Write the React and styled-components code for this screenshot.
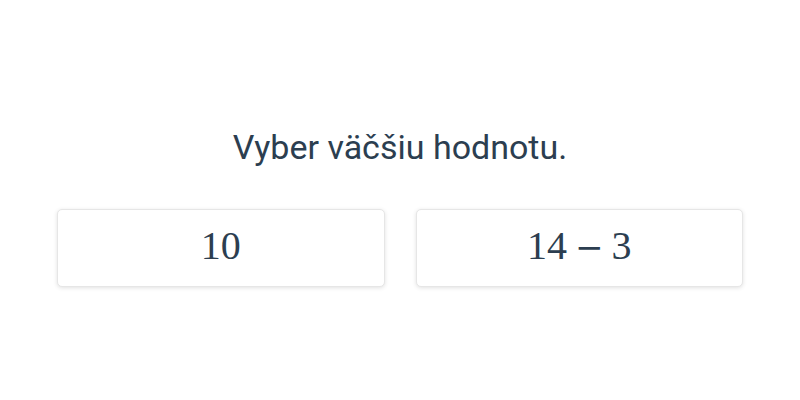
import React from "react";
import styled, { createGlobalStyle } from "styled-components";

const GlobalStyle = createGlobalStyle`
  html, body {
    margin: 0;
    padding: 0;
    background: #ffffff;
  }
  body {
    font-family: Roboto, "Liberation Sans", sans-serif;
  }
`;

const Page = styled.div`
  width: 800px;
  height: 400px;
  box-sizing: border-box;
  padding: 125px 57px 0;
  display: flex;
  flex-direction: column;
  align-items: stretch;
`;

const Question = styled.h2`
  margin: 0;
  text-align: center;
  font-family: Roboto, sans-serif;
  font-weight: 400;
  font-size: 34px;
  line-height: 44px;
  color: #2c3e50;
`;

const Options = styled.div`
  margin-top: 40px;
  display: grid;
  grid-template-columns: 1fr 1fr;
  gap: 31px;
`;

const Option = styled.button`
  height: 78px;
  box-sizing: border-box;
  background: #ffffff;
  border: 1px solid #e6e6e6;
  border-radius: 5px;
  box-shadow: 0 1px 4px rgba(0, 0, 0, 0.12);
  display: flex;
  align-items: center;
  justify-content: center;
  cursor: pointer;
  padding: 0 0 5px;
`;

const MathText = styled.span`
  font-family: "Liberation Serif", "DejaVu Serif", serif;
  font-size: 40px;
  color: #2c3e50;
  display: inline-flex;
  align-items: baseline;
`;

const Op = styled.span`
  font-family: "DejaVu Serif", serif;
  font-size: 34px;
  font-weight: 300;
  margin: 0 8px;
`;

export default function App() {
  return (
    <>
      <GlobalStyle />
      <Page>
        <Question>Vyber väčšiu hodnotu.</Question>
        <Options>
          <Option>
            <MathText>10</MathText>
          </Option>
          <Option>
            <MathText>
              14<Op>−</Op>3
            </MathText>
          </Option>
        </Options>
      </Page>
    </>
  );
}
